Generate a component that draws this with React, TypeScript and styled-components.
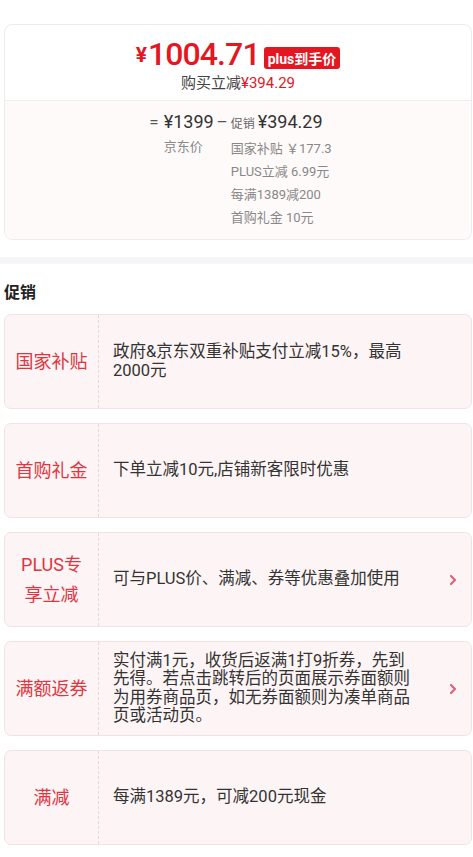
import React from 'react'
import styled, { createGlobalStyle } from 'styled-components'

const GlobalStyle = createGlobalStyle`
  body {
    margin: 0;
    background: #fff;
    font-family: Roboto, "Noto Sans CJK SC", sans-serif;
    color: #333;
  }
`

const Page = styled.div`
  width: 473px;
  padding-bottom: 12px;
`

const TopWrap = styled.div`
  padding: 24px 1px 0 4px;
`

const PriceCard = styled.div`
  border: 1px solid #ececec;
  border-radius: 8px;
  overflow: hidden;
`

const PriceHead = styled.div`
  height: 75px;
  display: flex;
  flex-direction: column;
  align-items: center;
  justify-content: center;
  padding-top: 2px;
  box-sizing: border-box;
`

const PriceLine = styled.div`
  display: flex;
  align-items: flex-end;
  color: #e4161f;
  height: 36px;
`

const Yen = styled.span`
  font-size: 21px;
  font-weight: 700;
  line-height: 1;
  margin-bottom: 4px;
  margin-right: 1px;
`

const BigNum = styled.span`
  font-size: 32px;
  font-weight: 500;
  line-height: 1;
  letter-spacing: -0.9px;
`

const Badge = styled.span`
  margin-left: 4px;
  margin-bottom: 1px;
  height: 22px;
  padding: 0 4px;
  display: flex;
  align-items: center;
  background: #e4161f;
  color: #fff;
  font-size: 14px;
  font-weight: 700;
  border-radius: 3px;
`

const SubLine = styled.div`
  font-size: 15px;
  line-height: 20px;
  color: #444;
  margin-top: 3px;
`

const Red = styled.span`
  color: #e4161f;
`

const Breakdown = styled.div`
  background: #fefafa;
  border-top: 1px solid #f4eeee;
  padding: 8px 0 10px;
  display: flex;
  justify-content: center;
  align-items: flex-start;
`

const Operator = styled.span<{ pad: number }>`
  font-size: 17px;
  line-height: 26px;
  color: #555;
  padding: 0 ${(p) => p.pad}px;
`

const Column = styled.div`
  display: flex;
  flex-direction: column;
`

const MainAmount = styled.div`
  font-size: 18px;
  line-height: 26px;
  color: #333;
  white-space: nowrap;
`

const Tag = styled.span`
  font-size: 12px;
  color: #666;
  margin-right: 3px;
`

const SubItem = styled.div`
  font-size: 13px;
  line-height: 23px;
  color: #888;
  white-space: nowrap;
`

const Band = styled.div`
  margin-top: 17px;
  height: 7px;
  background: #f5f5f8;
`

const Section = styled.div`
  padding: 0 1px 0 4px;
`

const Heading = styled.h3`
  margin: 18px 0 10px;
  font-size: 16px;
  line-height: 22px;
  font-weight: 700;
  color: #222;
`

const PromoList = styled.div`
  display: flex;
  flex-direction: column;
  gap: 14px;
`

const PromoCard = styled.div`
  display: grid;
  grid-template-columns: 94px 1fr 30px;
  min-height: 95px;
  box-sizing: border-box;
  background: #fdf5f5;
  border: 1px solid #f3e2e4;
  border-radius: 7px;
`

const Label = styled.div`
  display: flex;
  align-items: center;
  justify-content: center;
  text-align: center;
  padding: 0 10px;
  border-right: 1px dashed #ecd6d9;
  font-size: 18px;
  line-height: 30px;
  color: #e2343f;
`

const Content = styled.div`
  display: flex;
  align-items: center;
  padding-left: 14px;
`

const Desc = styled.div`
  max-width: 304px;
  font-size: 16.5px;
  line-height: 18.5px;
  color: #333;
`

const ArrowCell = styled.div`
  display: flex;
  align-items: center;
  justify-content: flex-start;
  padding-left: 8px;
`

const Chevron = () => (
  <svg width="8" height="12" viewBox="0 0 8 12">
    <path
      d="M2 2 L6 6 L2 10"
      fill="none"
      stroke="#e0607a"
      strokeWidth="2.2"
      strokeLinecap="round"
      strokeLinejoin="round"
    />
  </svg>
)

const promos = [
  { label: '国家补贴', text: '政府&京东双重补贴支付立减15%，最高2000元', arrow: false },
  { label: '首购礼金', text: '下单立减10元,店铺新客限时优惠', arrow: false },
  { label: 'PLUS专享立减', text: '可与PLUS价、满减、券等优惠叠加使用', arrow: true },
  {
    label: '满额返券',
    text: '实付满1元，收货后返满1打9折券，先到先得。若点击跳转后的页面展示券面额则为用券商品页，如无券面额则为凑单商品页或活动页。',
    arrow: true,
  },
  { label: '满减', text: '每满1389元，可减200元现金', arrow: false },
]

const subItems = ['国家补贴 ￥177.3', 'PLUS立减 6.99元', '每满1389减200', '首购礼金 10元']

export default function App() {
  return (
    <Page>
      <GlobalStyle />
      <TopWrap>
        <PriceCard>
          <PriceHead>
            <PriceLine>
              <Yen>¥</Yen>
              <BigNum>1004.71</BigNum>
              <Badge>plus到手价</Badge>
            </PriceLine>
            <SubLine>
              购买立减<Red>¥394.29</Red>
            </SubLine>
          </PriceHead>
          <Breakdown>
            <Operator pad={5}>=</Operator>
            <Column>
              <MainAmount>¥1399</MainAmount>
              <SubItem>京东价</SubItem>
            </Column>
            <Operator pad={3}>–</Operator>
            <Column>
              <MainAmount>
                <Tag>促销</Tag>¥394.29
              </MainAmount>
              {subItems.map((s) => (
                <SubItem key={s}>{s}</SubItem>
              ))}
            </Column>
          </Breakdown>
        </PriceCard>
      </TopWrap>
      <Band />
      <Section>
        <Heading>促销</Heading>
        <PromoList>
          {promos.map((p) => (
            <PromoCard key={p.label}>
              <Label>{p.label}</Label>
              <Content>
                <Desc>{p.text}</Desc>
              </Content>
              <ArrowCell>{p.arrow && <Chevron />}</ArrowCell>
            </PromoCard>
          ))}
        </PromoList>
      </Section>
    </Page>
  )
}
